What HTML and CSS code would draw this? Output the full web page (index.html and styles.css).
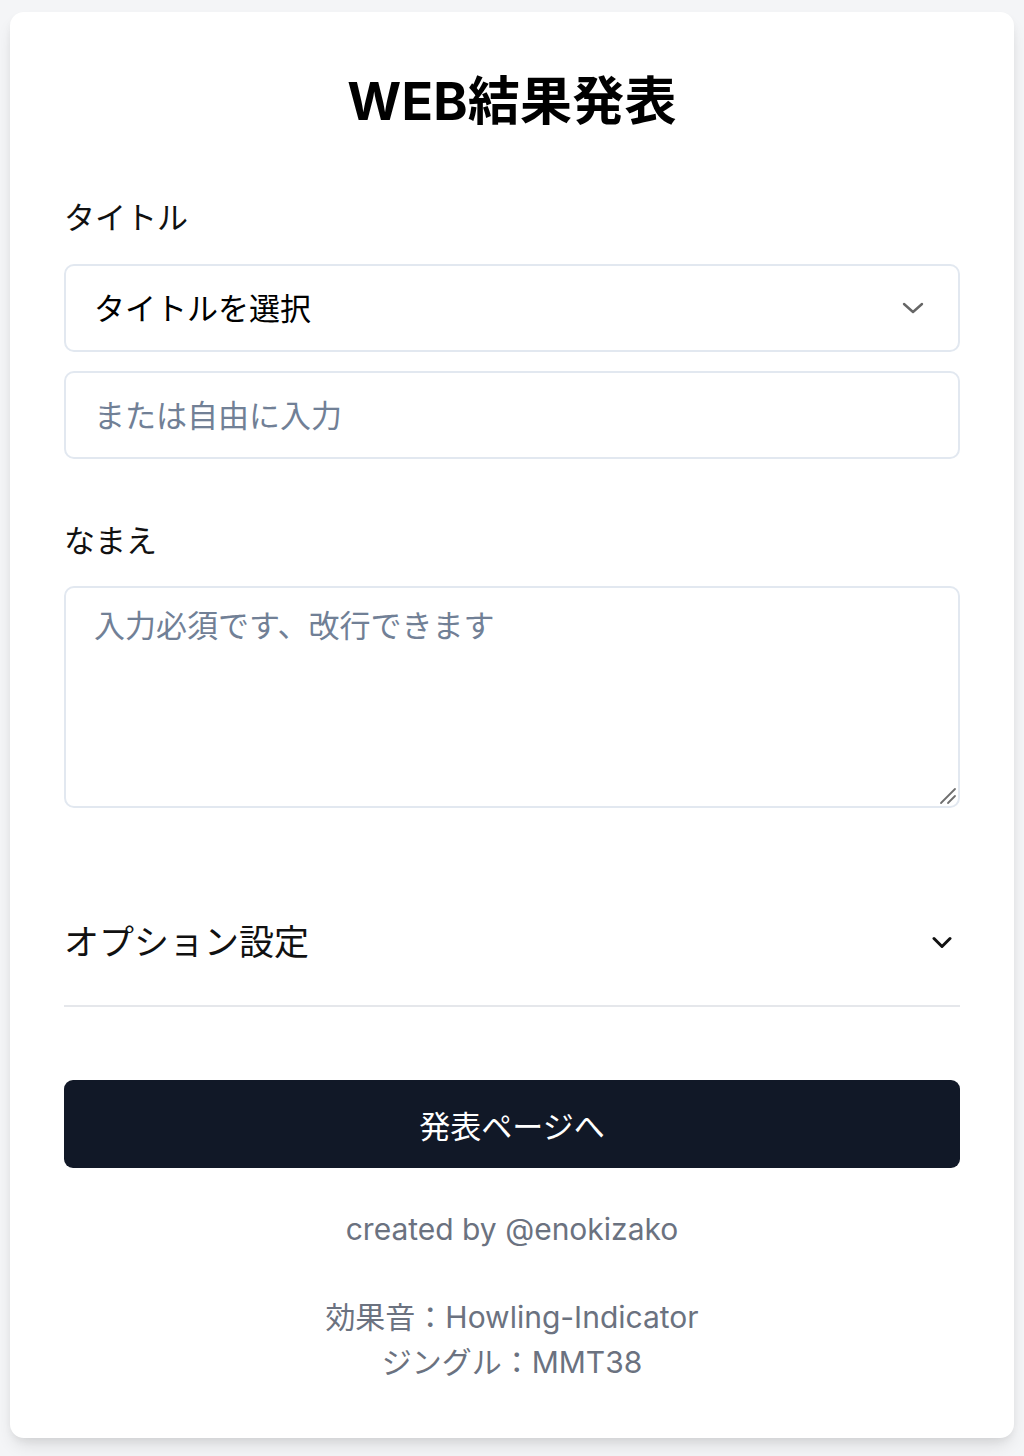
FILE: index.html
```html
<!DOCTYPE html>
<html lang="ja">
<head>
<meta charset="utf-8">
<title>WEB結果発表</title>
<link rel="stylesheet" href="styles.css">
</head>
<body>
<main class="card">
  <h1 class="title">WEB結果発表</h1>

  <section class="field">
    <label class="label" for="title-select">タイトル</label>
    <div class="select-wrap">
      <select id="title-select" class="control select">
        <option>タイトルを選択</option>
      </select>
      <svg class="select-icon" width="22" height="12" viewBox="0 0 22 12" aria-hidden="true">
        <path d="M2 2 L11 10 L20 2" fill="none" stroke="#666" stroke-width="2.4" stroke-linecap="round" stroke-linejoin="round"/>
      </svg>
    </div>
    <input class="control input" type="text" placeholder="または自由に入力">
  </section>

  <section class="field field-name">
    <label class="label" for="name">なまえ</label>
    <div class="textarea-wrap">
      <textarea id="name" class="control textarea" placeholder="入力必須です、改行できます"></textarea>
      <svg class="resize-icon" width="20" height="20" viewBox="0 0 20 20" aria-hidden="true">
        <path d="M3 17 L17 3 M10 17 L17 10" fill="none" stroke="#6f6f6f" stroke-width="1.8" stroke-linecap="round"/>
      </svg>
    </div>
  </section>

  <section class="options">
    <div class="options-head">
      <span class="options-title">オプション設定</span>
      <svg class="options-icon" width="20" height="13" viewBox="0 0 20 13" aria-hidden="true">
        <path d="M2 2.5 L10 10.5 L18 2.5" fill="none" stroke="#111" stroke-width="3" stroke-linecap="round" stroke-linejoin="round"/>
      </svg>
    </div>
  </section>

  <button class="submit" type="button">発表ページへ</button>

  <p class="created">created by @enokizako</p>
  <p class="credits">効果音：Howling-Indicator<br>ジングル：MMT38</p>
</main>
</body>
</html>
```

FILE: styles.css
```css
* {
  box-sizing: border-box;
}

html, body {
  margin: 0;
  padding: 0;
}

body {
  background: #f4f5f7;
  font-family: "Inter", "Noto Sans CJK JP", sans-serif;
  color: #111;
  padding: 12px 10px 18px;
}

.card {
  background: #ffffff;
  border-radius: 14px;
  box-shadow: 0 10px 18px -4px rgba(0, 0, 0, 0.12), 0 4px 8px -2px rgba(0, 0, 0, 0.06);
  padding: 58px 54px 53px;
  display: flex;
  flex-direction: column;
}

.title {
  margin: 0;
  text-align: center;
  font-size: 52px;
  line-height: 64px;
  font-weight: 700;
  color: #000;
  letter-spacing: 0.2px;
}

.field {
  display: flex;
  flex-direction: column;
  margin-top: 60px;
}

.field-name {
  margin-top: 58px;
}

.label {
  font-size: 31px;
  line-height: 48px;
  color: #111;
  margin-bottom: 22px;
}

.field-name .label {
  margin-bottom: 21px;
}

.control {
  width: 100%;
  font-family: "Inter", "Noto Sans CJK JP", sans-serif;
  font-size: 31px;
  border: 2px solid #e2e8f0;
  border-radius: 10px;
  background: #fff;
  color: #000;
  outline: none;
}

.control::placeholder {
  color: #718096;
  opacity: 1;
}

.select-wrap,
.textarea-wrap {
  position: relative;
}

.select {
  appearance: none;
  -webkit-appearance: none;
  height: 88px;
  padding: 0 70px 0 28px;
  display: block;
}

.select-icon {
  position: absolute;
  right: 36px;
  top: 38px;
  pointer-events: none;
}

.input {
  height: 88px;
  margin-top: 19px;
  padding: 0 28px;
}

.textarea {
  height: 222px;
  padding: 14px 28px;
  line-height: 47px;
  resize: none;
  display: block;
}

.resize-icon {
  position: absolute;
  right: 2px;
  bottom: 2px;
  pointer-events: none;
}

.options {
  margin-top: 110px;
}

.options-head {
  display: flex;
  align-items: center;
  justify-content: space-between;
  padding-bottom: 38px;
  border-bottom: 2px solid #e5e7eb;
}

.options-title {
  font-size: 35px;
  line-height: 49px;
  color: #111;
}

.options-icon {
  margin-right: 8px;
}

.submit {
  margin-top: 73px;
  height: 88px;
  width: 100%;
  border: none;
  border-radius: 9px;
  background: #111827;
  color: #fff;
  font-family: "Inter", "Noto Sans CJK JP", sans-serif;
  font-size: 31px;
}

.created {
  margin: 40px 0 0;
  text-align: center;
  font-size: 30px;
  line-height: 42px;
  color: #6b7280;
}

.credits {
  margin: 45px 0 0;
  text-align: center;
  font-size: 30px;
  line-height: 45px;
  color: #6b7280;
}
```
